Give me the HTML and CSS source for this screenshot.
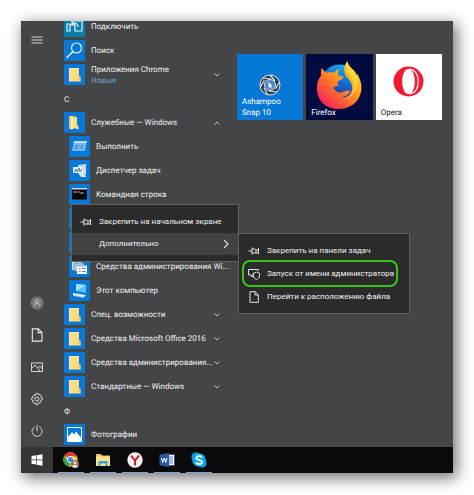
FILE: index.html
```html
<!DOCTYPE html>
<html lang="ru">
<head>
<meta charset="utf-8">
<title>Меню «Пуск»</title>
<link rel="stylesheet" href="styles.css">
</head>
<body>
<svg width="0" height="0" class="defs" aria-hidden="true">
  <symbol id="folder" viewBox="0 0 21 21"><path d="M5 4h10v8l1.500 1v4.500H5z" fill="#fbdc82"/><path d="M5 4h10v1H6v12.500H5z" fill="#ffe9a8"/><path d="M15 12l1.500 1v4.500H14V15l1-1z" fill="#f0c766"/></symbol>
  <symbol id="down" viewBox="0 0 8 8"><path d="M1.500 2.500L4 5l2.500-2.500" fill="none" stroke="#c4c4c4"/></symbol>
  <symbol id="up" viewBox="0 0 8 8"><path d="M1.500 5.500L4 3l2.500 2.500" fill="none" stroke="#c4c4c4"/></symbol>
  <symbol id="pin" viewBox="0 0 12 12"><path d="M.5 6H4M4 2.500v7M4 4h2.500L8 5h2.500M4 8h6.500M8 5v3M10.500 3v6" fill="none" stroke="#e4e4e4"/></symbol>
  <symbol id="page" viewBox="0 0 12 12"><path d="M2 .7h5.300L10.300 4v7.300H2zM7 .7V4h3.300" fill="none" stroke="#e4e4e4"/></symbol>
</svg>
<main class="desktop">
  <div class="start">
    <nav class="rail">
      <button aria-label="Меню"><svg viewBox="0 0 14 14"><path d="M1.500 4h11M1.500 7h11M1.500 10h11" stroke="#d6d6d6"/></svg></button>
      <span class="spring"></span>
      <button aria-label="Пользователь"><svg viewBox="0 0 14 14"><circle cx="7" cy="7" r="6.500" fill="#777"/><circle cx="7" cy="5.500" r="1.800" fill="none" stroke="#d0d0d0" stroke-width=".8"/><path d="M4.200 10.500c0-4 5.600-4 5.600 0" fill="none" stroke="#d0d0d0" stroke-width=".8"/></svg></button>
      <button aria-label="Документы"><svg viewBox="0 0 12 12"><use href="#page"/></svg></button>
      <button aria-label="Изображения"><svg viewBox="0 0 14 14"><path d="M1.500 3h11v8.500h-11zM2 8l3-3 5 6M8 8l2-2 2.500 3" fill="none" stroke="#d6d6d6"/></svg></button>
      <button aria-label="Параметры"><svg viewBox="0 0 14 14"><path d="M6 1.500h2l.4 1.500 1.500-.8 1.500 1.500-.8 1.400 1.700.5v2l-1.700.5.8 1.500-1.500 1.400-1.500-.8L8 12.500H6l-.5-1.800-1.400.8-1.500-1.400.8-1.500-1.700-.5v-2l1.700-.5-.8-1.400 1.500-1.500 1.400.8z" fill="none" stroke="#d6d6d6"/><circle cx="7" cy="7" r="2" fill="none" stroke="#d6d6d6"/></svg></button>
      <button aria-label="Выключение"><svg viewBox="0 0 14 14"><path d="M4.500 3a5 5 0 1 0 5 0M7 1v6" fill="none" stroke="#d6d6d6"/></svg></button>
    </nav>
    <ul class="apps">
      <li class="row"><svg class="ico teal" viewBox="0 0 21 21"><path d="M8 9V5h10v10h-5M3 8h3v7H3zM6 9h5v6h6M8 6l3 3M10 7c3 0 4 2 4 4" fill="none" stroke="#e6f6ff" stroke-width="1.200"/></svg><span class="name">Подключить</span></li>
      <li class="row"><svg class="ico" viewBox="0 0 21 21"><circle cx="12.500" cy="8" r="5" fill="none" stroke="#e8f4ff" stroke-width="1.200"/><path d="M9 11.500L2.500 18" stroke="#e8f4ff" stroke-width="1.400"/></svg><span class="name">Поиск</span></li>
      <li class="row"><svg class="ico"><use href="#folder"/></svg><span class="name">Приложения Chrome<small>Новые</small></span><svg class="chev"><use href="#down"/></svg></li>
      <li class="row letter">С</li>
      <li class="row"><svg class="ico" viewBox="0 0 21 21"><path d="M5 4h5v13H5z" fill="#f2c65c"/><path d="M7 4l6 1v8l1.500 1v3.500L10 16l-3 1.500z" fill="#fbdc82"/><path d="M7 4v13.500l2-1V6z" fill="#fff0bc"/></svg><span class="name">Служебные — Windows</span><svg class="chev"><use href="#up"/></svg></li>
      <li class="row sub"><svg class="ico" viewBox="0 0 21 21"><path d="M5 5h13l-2 10H3z" fill="#75b9ef"/><path d="M5 5h13l-.4 2h-13z" fill="#b9e0fb"/><path d="M7 9h7l-1 4H6z" fill="#2c83cf"/><path d="M8 10h5M7.500 12h5" stroke="#cfeaff" stroke-width=".8"/></svg><span class="name">Выполнить</span></li>
      <li class="row sub"><svg class="ico" viewBox="0 0 21 21"><path d="M9 5l8-1v10l-7 1z" fill="#c2dff2"/><path d="M4 7h10v6H4z" fill="#eaf2f7"/><path d="M5 12l2-3 1 3 2-4 1 4 2-3" fill="none" stroke="#3977b5"/><path d="M10 14h6l1 3h-5z" fill="#dce9f0"/></svg><span class="name">Диспетчер задач</span></li>
      <li class="row sub"><svg class="ico" viewBox="0 0 21 21"><path d="M3 4.500h15v11H3z" fill="#050505"/><path d="M3 4h15v1.500H3z" fill="#d5d5d5"/><path d="M4.500 8h3m1 0h2m1 1h3" stroke="#eee"/></svg><span class="name">Командная строка</span></li>
      <li class="row sub"><svg class="ico"><use href="#folder"/></svg></li>
      <li class="row sub"><svg class="ico"><use href="#folder"/></svg></li>
      <li class="row sub"><svg class="ico" viewBox="0 0 21 21"><path d="M3 5h10v9H3z" fill="#c8def0"/><path d="M5 7h10v8H5z" fill="#a7c8e2" stroke="#477aa8" stroke-width=".6"/><path d="M8 9h10v9H8z" fill="#fff"/><path d="M8 9h10v1.500H8z" fill="#9ab8cf"/><path d="M10 12.500h1.500m1.500 0h3.500M10 15.500h1.500m1.500 0h3.500" stroke="#4384bb"/></svg><span class="name">Средства администрирования Wi...</span></li>
      <li class="row sub"><svg class="ico" viewBox="0 0 21 21"><path d="M7 4l10 1v8L7 11z" fill="#55c3f5"/><path d="M7 4l10 1-10 6z" fill="#9ee2ff"/><path d="M4 13l7 1 6 1-3 2.500-10-2z" fill="#d8edf8"/><path d="M4 15.500l10 2 3-2" stroke="#8eb8d2" fill="none" stroke-width=".7"/></svg><span class="name">Этот компьютер</span></li>
      <li class="row"><svg class="ico"><use href="#folder"/></svg><span class="name">Спец. возможности</span><svg class="chev"><use href="#down"/></svg></li>
      <li class="row"><svg class="ico"><use href="#folder"/></svg><span class="name">Средства Microsoft Office 2016</span><svg class="chev"><use href="#down"/></svg></li>
      <li class="row"><svg class="ico"><use href="#folder"/></svg><span class="name">Средства администрирования...</span><svg class="chev"><use href="#down"/></svg></li>
      <li class="row"><svg class="ico"><use href="#folder"/></svg><span class="name">Стандартные — Windows</span><svg class="chev"><use href="#down"/></svg></li>
      <li class="row letter">Ф</li>
      <li class="row"><svg class="ico" viewBox="0 0 21 21"><path d="M3.500 3.500h14v14h-14z" fill="none" stroke="#fff"/><path d="M4 17v-4l4-5 2 2.500 2-3 5 6V17z" fill="#fff"/></svg><span class="name">Фотографии</span></li>
    </ul>
    <section class="tiles">
      <a href="#" class="tile snap"><svg viewBox="0 0 22 22"><circle cx="11" cy="11" r="10" fill="#303942" stroke="#e2e8ed"/><path d="M11 1l5 6M20.500 8l-4 7M18 18l-8-1M9 21l-4-7M1.500 13l4-7M4 4l8 1" stroke="#e2e8ed" stroke-width="1.200"/><circle cx="11" cy="11" r="5.500" fill="#4688ce" stroke="#d9e5ef"/><path d="M9.500 8l4 4-1.700.2.800 1.900-1 .5-.8-1.900-1.300 1z" fill="#fff"/></svg><span>Ashampoo<br>Snap 10</span></a>
      <a href="#" class="tile firefox"><svg viewBox="0 0 48 50">
        <defs><linearGradient id="ff" x1="1" y1="0" x2=".15" y2="1"><stop offset="0" stop-color="#fff44f"/><stop offset=".35" stop-color="#ffb01f"/><stop offset=".65" stop-color="#ff6a2a"/><stop offset="1" stop-color="#f5156c"/></linearGradient><linearGradient id="fb" x1=".7" y1="0" x2=".3" y2="1"><stop offset="0" stop-color="#16b5f5"/><stop offset=".5" stop-color="#1464d2"/><stop offset="1" stop-color="#262a86"/></linearGradient></defs>
        <circle cx="24" cy="23" r="18.500" fill="url(#fb)"/>
        <path d="M6 8c1 2 3 4 5 5 3-1 6-1 8 0 1-2 3-3 5-4-1 2-2 4-1 6 1 2 4 1 5 2 0 3-6 4-6 6 0 1 1 3 1 4-2-1-4 0-5 1 1 4 5 6 9 5 3-1 4-3 8-1-2 4-6 6-10 6 9 2 14-6 11-14-1-3-3-5-5-7-3-5-3-11 1-16 1 5 4 7 7 10 1 1 2 3 2 5l1-2c5 8 6 17 2 24-4 8-12 12-21 12C9 50 0 40 1 27c0-5 2-8 4-11 0-3 0-6 1-8z" fill="url(#ff)"/>
        <path d="M32 1c1 5 4 7 7 10 5 6 5 15 1 21-3 5-8 8-13 8 9-2 13-9 11-17-1-7-9-11-6-22z" fill="#ffe340" opacity=".6"/></svg><span>Firefox</span></a>
      <a href="#" class="tile opera"><svg viewBox="0 0 32 32"><path fill-rule="evenodd" d="M16 .5a15.500 15.500 0 1 0 0 31 15.500 15.500 0 0 0 0-31zM16 3c4 0 6.500 6 6.500 13S20 29 16 29 9.500 23 9.500 16 12 3 16 3z" fill="#f21c32"/><path d="M17 3c6 1 9 6 9 13s-3 12-9 13" fill="none" stroke="#fff" stroke-width="1.200"/></svg><span>Opera</span></a>
    </section>
    <div class="menu context" role="menu">
      <button role="menuitem"><svg><use href="#pin"/></svg>Закрепить на начальном экране</button>
      <button role="menuitem" class="open"><svg></svg>Дополнительно<svg class="more" viewBox="0 0 8 10"><path d="M2 1l4 4-4 4" fill="none" stroke="#ddd" stroke-width="1.200"/></svg></button>
    </div>
    <div class="menu submenu" role="menu">
      <button role="menuitem"><svg><use href="#pin"/></svg>Закрепить на панели задач</button>
      <button role="menuitem" class="marked"><svg viewBox="0 0 12 12"><path d="M5 8.500H3M10.500 3V1.500H.5V7H5" fill="none" stroke="#e4e4e4"/><path d="M8.500 4c1 .8 2 1 3 1v3c0 1.500-1.500 3-3 3.500C7 11 5.500 9.500 5.500 8V5c1 0 2-.2 3-1z" fill="none" stroke="#e4e4e4" stroke-width=".9"/></svg>Запуск от имени администратора</button>
      <button role="menuitem"><svg><use href="#page"/></svg>Перейти к расположению файла</button>
    </div>
  </div>
  <footer class="taskbar">
    <button class="win" aria-label="Пуск"><svg viewBox="0 0 12 12"><path d="M.5 2L5 1.300v4.200H.5zM5.600 1.200L11.500.3v5.200H5.600zM.5 6.200H5v4.300L.5 9.800zM5.600 6.200h5.900v5.500l-5.900-1z" fill="#fff"/></svg></button>
    <button class="app" aria-label="Chrome"><svg viewBox="0 0 16 16"><circle cx="7.500" cy="7.500" r="7.200" fill="#fc3"/><path d="M7.500 7.500L1.300 3.800A7.200 7.200 0 0 1 14 4.500H7.500z" fill="#e3392f"/><path d="M1.300 3.800L5 9.500l2.500 2-1 3.200A7.200 7.200 0 0 1 1.300 3.800z" fill="#2fa24c"/><circle cx="7.500" cy="7.500" r="3.400" fill="#fff"/><circle cx="7.500" cy="7.500" r="2.600" fill="#4285f4"/><circle cx="12" cy="12" r="4" fill="#8c6c4c"/><circle cx="12" cy="10.800" r="1.800" fill="#f0cdb0"/><path d="M9 15c0-3 6-3 6 0l-3 1z" fill="#dbe0d2"/></svg></button>
    <button class="app" aria-label="Проводник"><svg viewBox="0 0 16 16"><path d="M1 2h5l1 1.500h8V14H1z" fill="#efc85a"/><path d="M1 4.500h14V14H1z" fill="#fce08a"/><path d="M3.500 14V9h9v5h-2v-2.500h-5V14z" fill="#35a3df"/></svg></button>
    <button class="app" aria-label="Яндекс"><svg viewBox="0 0 16 16"><circle cx="8" cy="8" r="7.700" fill="#f2f2f2"/><path d="M4 3.500l4 5 4-5M8 8v5.500" fill="none" stroke="#d3122b" stroke-width="2"/></svg></button>
    <button class="app" aria-label="Word"><svg viewBox="0 0 16 16"><path d="M8 2.500h7.500v11H8z" fill="#fff" stroke="#2b579a"/><path d="M10 5h4M10 7h4M10 9h4M10 11h4" stroke="#4b78b9"/><path d="M.5 2.500L10 1v14L.5 13.500z" fill="#2b579a"/><path d="M2.500 6l1.200 4.500L5.300 6l1.500 4.500L8 6" fill="none" stroke="#fff"/></svg></button>
    <button class="app" aria-label="Skype"><svg viewBox="0 0 16 16"><circle cx="5" cy="5" r="4.600" fill="#0f9fe0"/><circle cx="11" cy="11" r="4.600" fill="#0f9fe0"/><circle cx="8" cy="8" r="6.800" fill="#10a8ea"/><path d="M11 5.500C10 3.500 5.500 3.500 5.500 6c0 2.500 5.500 1.500 5.500 4.200 0 2.400-5 2.400-6 .3" fill="none" stroke="#fff" stroke-width="1.800"/></svg></button>
  </footer>
</main>
</body>
</html>
```
FILE: styles.css
```css
* { box-sizing: border-box; }

body {
  margin: 0;
  padding: 21px 21px 22px;
  background: #fff;
  color: #f4f4f4;
  font: 8px/12px Roboto, "Open Sans", sans-serif;
  text-rendering: geometricPrecision;
}

button {
  margin: 0;
  padding: 0;
  border: 0;
  background: none;
  color: inherit;
  font: inherit;
}

.defs { position: absolute; }

.desktop {
  display: flex;
  flex-direction: column;
  height: calc(100vh - 43px);
  box-shadow: 3px 4px 14px 1px rgba(0, 0, 0, .55);
}

.start {
  position: relative;
  flex: 1;
  min-height: 0;
  display: grid;
  grid-template-columns: 32px 180px 1fr;
  grid-template-rows: 100%;
  background: #444546;
}

.rail {
  display: flex;
  flex-direction: column;
  padding-top: 3px;
}

.rail button {
  display: grid;
  place-items: center;
  height: 32px;
  flex: none;
}

.rail svg { width: 14px; height: 14px; }
.spring { flex: 1; }

.apps {
  display: flex;
  flex-direction: column;
  justify-content: flex-end;
  gap: 3px;
  margin: 0;
  padding: 0 0 2px 11px;
  overflow: hidden;
  list-style: none;
}

.row {
  display: flex;
  flex: none;
  align-items: center;
  gap: 6px;
  height: 21px;
  white-space: nowrap;
}

.sub { padding-left: 5px; }
.letter { padding-top: 3px; }

.ico {
  flex: none;
  width: 21px;
  height: 21px;
  background: #0878d7;
}

.teal { background: #087da8; }
.name { flex: 1; min-width: 0; }

.name small {
  display: block;
  color: #6fa0c8;
  font-size: 8px;
  line-height: 10px;
}

.chev { width: 8px; height: 8px; margin-right: 12px; }

.tiles {
  display: flex;
  align-items: flex-start;
  gap: 3px;
  padding: 33px 11px 0 4px;
}

.tile {
  display: grid;
  flex: 1;
  aspect-ratio: 1;
  align-items: end;
  padding: 0 5px 2px;
  color: #fff;
  line-height: 11px;
  text-decoration: none;
}

.tile svg, .tile span { grid-area: 1 / 1; }
.tile svg { justify-self: center; align-self: start; }
.snap { background: #0878d7; }
.snap svg { width: 22px; height: 22px; margin-top: 20px; }
.firefox { background: #020b40; }
.firefox svg { width: 47px; height: 49px; margin-top: 6px; }
.opera { background: #fff; color: #222; }
.opera svg { width: 31px; height: 31px; margin-top: 12px; }

.menu {
  position: absolute;
  display: flex;
  flex-direction: column;
  border: 1px solid #616161;
  background: #2b2b2b;
}

.menu button {
  display: flex;
  align-items: center;
  gap: 7px;
  height: 23px;
  text-align: left;
  white-space: nowrap;
}

.menu svg { flex: none; width: 12px; height: 12px; }

.context {
  left: 50px;
  top: 183px;
  width: 168px;
  padding: 6px 0;
}

.context button { height: 22px; padding: 0 8px; }
.context .open { background: #414141; }
.menu .more { width: 8px; height: 10px; margin-left: auto; }

.submenu {
  left: 217px;
  top: 212px;
  width: 172px;
  padding: 5px;
}

.submenu button { padding: 0 4px; }

.submenu .marked {
  outline: 2px solid #38c31a;
  border-radius: 6px;
  margin-right: 8px;
}

.taskbar {
  display: flex;
  gap: 6px;
  height: 26px;
  background: #090909;
}

.taskbar button { display: grid; place-items: center; }
.taskbar .win { width: 32px; background: #353535; margin-right: -1px; }
.win svg { width: 12px; height: 12px; }

.app {
  width: 26px;
  border-bottom: 1px solid #76a9d7;
}

.app svg { width: 16px; height: 16px; }
```
